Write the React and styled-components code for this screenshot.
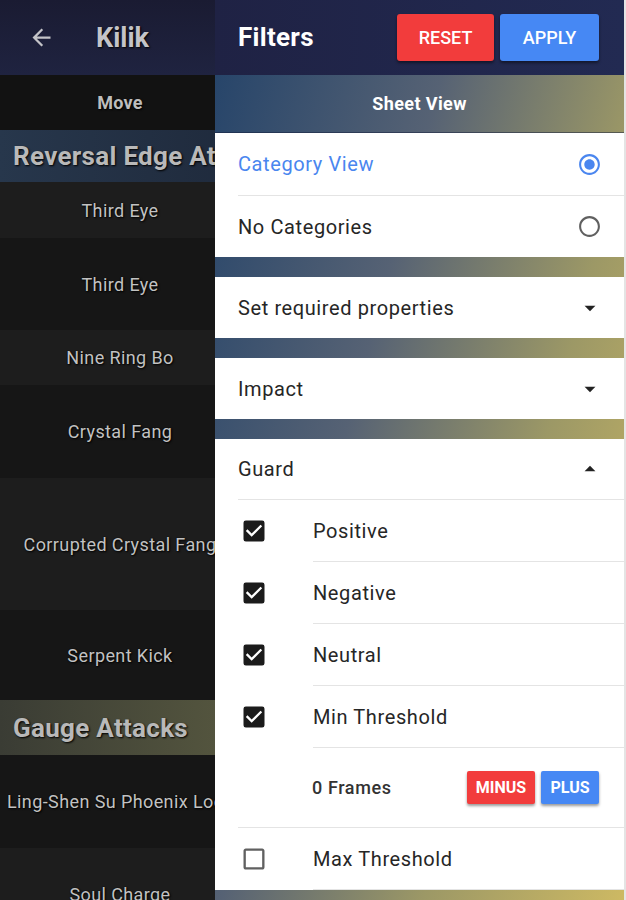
import styled, { createGlobalStyle } from "styled-components";
import {
  MdArrowBack,
  MdArrowDropDown,
  MdArrowDropUp,
  MdCheckBox,
  MdCheckBoxOutlineBlank,
  MdRadioButtonChecked,
  MdRadioButtonUnchecked,
} from "react-icons/md";

const GlobalStyle = createGlobalStyle`
  html, body {
    margin: 0;
    padding: 0;
    background: #e4e4e4;
    font-family: Roboto, "Liberation Sans", sans-serif;
  }
  * { box-sizing: border-box; }
`;

const Screen = styled.div`
  display: flex;
  width: 626px;
  height: 900px;
  overflow: hidden;
`;

/* ---------- left (dimmed) app ---------- */

const LeftPane = styled.div`
  width: 215px;
  flex-shrink: 0;
  overflow: hidden;
  background: #151515;
`;

const LeftInner = styled.div`
  width: 240px;
  display: flex;
  flex-direction: column;
`;

const LeftBar = styled.div`
  height: 75px;
  display: flex;
  align-items: center;
  padding-left: 28px;
  gap: 41px;
  background: linear-gradient(180deg, #1a1b32 0%, #1f2340 100%);
  color: #c4c4c8;
  font-size: 27px;
  font-weight: 700;
  text-shadow: 1px 1px 2px #000;
`;

const ColumnHead = styled.div`
  height: 55px;
  display: flex;
  align-items: center;
  justify-content: center;
  background: #121212;
  color: #bdbdbd;
  font-size: 18px;
  font-weight: 700;
  letter-spacing: 0.2px;
  text-shadow: 1px 1px 2px #000;
`;

const SectionHead = styled.div`
  height: ${(p) => p.$h}px;
  display: flex;
  align-items: center;
  padding-left: 13px;
  white-space: nowrap;
  background: ${(p) => p.$bg};
  color: #b9b9b9;
  font-size: 26px;
  font-weight: 700;
  letter-spacing: 0.3px;
  text-shadow: 1px 1px 2px #000;
`;

const MoveRow = styled.div`
  height: ${(p) => p.$h}px;
  display: flex;
  align-items: center;
  justify-content: center;
  white-space: nowrap;
  background: ${(p) => (p.$alt ? "#1d1d1d" : "#161616")};
  color: #c2c2c2;
  font-size: 18px;
  letter-spacing: 0.4px;
  text-shadow: 1px 1px 2px #000, 0 0 1px #000;
`;

/* ---------- drawer ---------- */

const Drawer = styled.div`
  width: 409px;
  flex-shrink: 0;
  display: flex;
  flex-direction: column;
`;

const DrawerBar = styled.div`
  height: 75px;
  display: flex;
  align-items: center;
  padding: 0 25px 0 23px;
  background: linear-gradient(90deg, #1f2244 0%, #222a52 100%);
`;

const Title = styled.div`
  flex: 1;
  color: #fff;
  font-size: 26px;
  font-weight: 700;
  letter-spacing: 0.3px;
  padding-bottom: 2px;
`;

const BarButton = styled.button`
  height: 47px;
  width: ${(p) => p.$w}px;
  margin-left: 6px;
  border: none;
  border-radius: 3px;
  background: ${(p) => p.$bg};
  color: #fff;
  font-family: inherit;
  font-size: 18px;
  font-weight: 500;
  box-shadow: 0 2px 3px rgba(0, 0, 0, 0.45);
`;

const DrawerBody = styled.div`
  flex: 1;
  display: flex;
  flex-direction: column;
  background: linear-gradient(
    105deg,
    #27456a 0%,
    #566274 36%,
    #9c9866 68%,
    #cdb963 100%
  );
`;

const SheetView = styled.div`
  height: 58px;
  display: flex;
  align-items: center;
  justify-content: center;
  color: #fff;
  font-size: 18px;
  font-weight: 700;
  letter-spacing: 0.4px;
  border-bottom: 1px solid rgba(20, 30, 60, 0.5);
`;

const Card = styled.div`
  background: #fff;
  margin-bottom: ${(p) => (p.$last ? 0 : 20)}px;
`;

const Row = styled.div`
  height: ${(p) => p.$h || 61}px;
  margin-left: 23px;
  padding-right: ${(p) => p.$pr || 22}px;
  display: flex;
  align-items: center;
  justify-content: space-between;
  border-bottom: ${(p) => (p.$line ? "1px solid #e4e4e4" : "none")};
  color: ${(p) => (p.$active ? "#4a86ef" : "#262626")};
  font-size: 20px;
  letter-spacing: 0.6px;
`;

const OptionRow = styled.div`
  display: flex;
  height: 62px;
`;

const CheckCell = styled.div`
  width: 98px;
  flex-shrink: 0;
  display: flex;
  align-items: center;
  padding-left: 25px;
`;

const OptionLabel = styled.div`
  flex: 1;
  display: flex;
  align-items: center;
  border-bottom: 1px solid #e4e4e4;
  color: #262626;
  font-size: 20px;
  letter-spacing: 0.6px;
`;

const FramesRow = styled.div`
  height: 80px;
  margin-left: 23px;
  padding: 0 25px 0 74px;
  display: flex;
  align-items: center;
  border-bottom: 1px solid #e4e4e4;
`;

const Frames = styled.div`
  flex: 1;
  color: #333;
  font-size: 18px;
  font-weight: 500;
  letter-spacing: 0.6px;
`;

const SmallButton = styled.button`
  height: 33px;
  width: ${(p) => p.$w}px;
  margin-left: 6px;
  border: none;
  border-radius: 2px;
  background: ${(p) => p.$bg};
  color: #fff;
  font-family: inherit;
  font-size: 16px;
  font-weight: 700;
  box-shadow: 0 2px 3px rgba(0, 0, 0, 0.4);
`;

const moves = [
  { t: "Third Eye", h: 56, alt: true },
  { t: "Third Eye", h: 92 },
  { t: "Nine Ring Bo", h: 55, alt: true },
  { t: "Crystal Fang", h: 93 },
  { t: "Corrupted Crystal Fang", h: 132, alt: true },
  { t: "Serpent Kick", h: 90 },
];

const options = [
  { t: "Positive", on: true },
  { t: "Negative", on: true },
  { t: "Neutral", on: true },
  { t: "Min Threshold", on: true },
];

export default function App() {
  return (
    <Screen>
      <GlobalStyle />
      <LeftPane>
        <LeftInner>
          <LeftBar>
            <MdArrowBack size={27} color="#c4c4c8" />
            <span>Kilik</span>
          </LeftBar>
          <ColumnHead>Move</ColumnHead>
          <SectionHead $h={52} $bg="linear-gradient(90deg, #27374c 0%, #1f2a3c 100%)">
            Reversal Edge Attacks
          </SectionHead>
          {moves.map((m, i) => (
            <MoveRow key={i} $h={m.h} $alt={m.alt}>
              {m.t}
            </MoveRow>
          ))}
          <SectionHead $h={55} $bg="linear-gradient(90deg, #3a3c34 0%, #56573f 100%)">
            Gauge Attacks
          </SectionHead>
          <MoveRow $h={93}>Ling-Shen Su Phoenix Lock</MoveRow>
          <MoveRow $h={92} $alt>
            Soul Charge
          </MoveRow>
        </LeftInner>
      </LeftPane>

      <Drawer>
        <DrawerBar>
          <Title>Filters</Title>
          <BarButton $w={97} $bg="#f23c3c">RESET</BarButton>
          <BarButton $w={99} $bg="#4688f4">APPLY</BarButton>
        </DrawerBar>
        <DrawerBody>
          <SheetView>Sheet View</SheetView>

          <Card>
            <Row $h={63} $line $active>
              Category View
              <MdRadioButtonChecked size={25} color="#4a86ef" />
            </Row>
            <Row $h={61}>
              No Categories
              <MdRadioButtonUnchecked size={25} color="#606060" />
            </Row>
          </Card>

          <Card>
            <Row $pr={21}>
              Set required properties
              <MdArrowDropDown size={26} color="#222" />
            </Row>
          </Card>

          <Card>
            <Row $pr={21}>
              Impact
              <MdArrowDropDown size={26} color="#222" />
            </Row>
          </Card>

          <Card $last>
            <Row $line $pr={21}>
              Guard
              <MdArrowDropUp size={26} color="#222" />
            </Row>
            {options.map((o) => (
              <OptionRow key={o.t}>
                <CheckCell>
                  <MdCheckBox size={28} color="#1b1b1b" />
                </CheckCell>
                <OptionLabel>{o.t}</OptionLabel>
              </OptionRow>
            ))}
            <FramesRow>
              <Frames>0 Frames</Frames>
              <SmallButton $w={68} $bg="#f23c3c">MINUS</SmallButton>
              <SmallButton $w={58} $bg="#4688f4">PLUS</SmallButton>
            </FramesRow>
            <OptionRow>
              <CheckCell>
                <MdCheckBoxOutlineBlank size={28} color="#606060" />
              </CheckCell>
              <OptionLabel>Max Threshold</OptionLabel>
            </OptionRow>
          </Card>
        </DrawerBody>
      </Drawer>
    </Screen>
  );
}
